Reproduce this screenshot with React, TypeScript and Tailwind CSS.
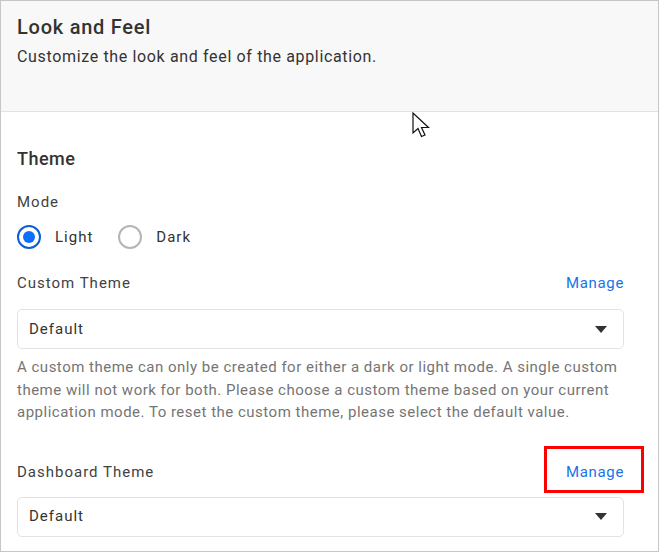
import React from "react";

function Radio({ checked, label }: { checked?: boolean; label: string }) {
  return (
    <label className="flex items-center gap-[14px]">
      <span
        className={
          checked
            ? "w-[24px] h-[24px] rounded-full border-2 border-[#0b5ed7] flex items-center justify-center"
            : "w-[24px] h-[24px] rounded-full border-2 border-[#b5b5b5]"
        }
      >
        {checked && <span className="w-[12px] h-[12px] rounded-full bg-[#0d6efd]" />}
      </span>
      <span className="text-[15px] tracking-[1px] text-[#333]">{label}</span>
    </label>
  );
}

function Select({ value }: { value: string }) {
  return (
    <div className="h-[40px] rounded-[5px] border border-[#e3e3e3] flex items-center justify-between pl-[11px] pr-[16px]">
      <span className="text-[15px] tracking-[1px] text-[#333]">{value}</span>
      <svg width="12" height="7" viewBox="0 0 12 7">
        <path d="M0 0h12L6 7z" fill="#333" />
      </svg>
    </div>
  );
}

export default function App() {
  return (
    <div
      className="relative w-[659px] h-[552px] border border-[#c6c6c6] bg-white overflow-hidden"
      style={{ fontFamily: "Roboto, 'Liberation Sans', sans-serif" }}
    >
      {/* Header */}
      <div className="h-[111px] bg-[#f8f8f8] border-b border-[#e2e2e2] pl-[16px] pt-[12px]">
        <h1 className="text-[20px] leading-[28px] font-medium tracking-[0.75px] text-[#333]">
          Look and Feel
        </h1>
        <p className="mt-[4px] text-[16px] leading-[24px] tracking-[0.65px] text-[#333]">
          Customize the look and feel of the application.
        </p>
      </div>

      {/* Body */}
      <div className="pl-[16px] pr-[34px] pt-[34px]">
        <h2 className="text-[18px] leading-[26px] font-medium tracking-[0.5px] text-[#333]">Theme</h2>

        <div className="mt-[19px] text-[15px] leading-[22px] tracking-[1px] text-[#424242]">Mode</div>
        <div className="mt-[12px] flex items-center gap-[25px]">
          <Radio checked label="Light" />
          <Radio label="Dark" />
        </div>

        <div className="mt-[23px] flex items-center justify-between">
          <span className="text-[15px] leading-[22px] tracking-[1px] text-[#424242]">Custom Theme</span>
          <a className="text-[15px] leading-[22px] tracking-[0.65px] text-[#1a73e8]">Manage</a>
        </div>
        <div className="mt-[15px]">
          <Select value="Default" />
        </div>
        <p className="mt-[7px] text-[15px] leading-[22.5px] tracking-[0.5px] text-[#757575]">
          A custom theme can only be created for either a dark or light mode. A single custom
          theme will not work for both. Please choose a custom theme based on your current
          application mode. To reset the custom theme, please select the default value.
        </p>

        <div className="mt-[37px] flex items-center justify-between">
          <span className="text-[15px] leading-[22px] tracking-[1px] text-[#424242]">Dashboard Theme</span>
          <a className="text-[15px] leading-[22px] tracking-[0.65px] text-[#1a73e8]">Manage</a>
        </div>
        <div className="mt-[14px]">
          <Select value="Default" />
        </div>
      </div>

      {/* Highlight box */}
      <div className="absolute left-[543px] top-[445px] w-[100px] h-[47px] border-[3px] border-[#ff0000]" />

      {/* Mouse cursor */}
      <svg className="absolute left-[411px] top-[111px]" width="20" height="28" viewBox="0 0 20 28">
        <path
          d="M1 1v20l5-4.5 3.5 8 3.5-1.5-3.5-7.5h7z"
          fill="#fff"
          stroke="#111"
          strokeWidth="1.2"
          strokeLinejoin="miter"
        />
      </svg>
    </div>
  );
}
